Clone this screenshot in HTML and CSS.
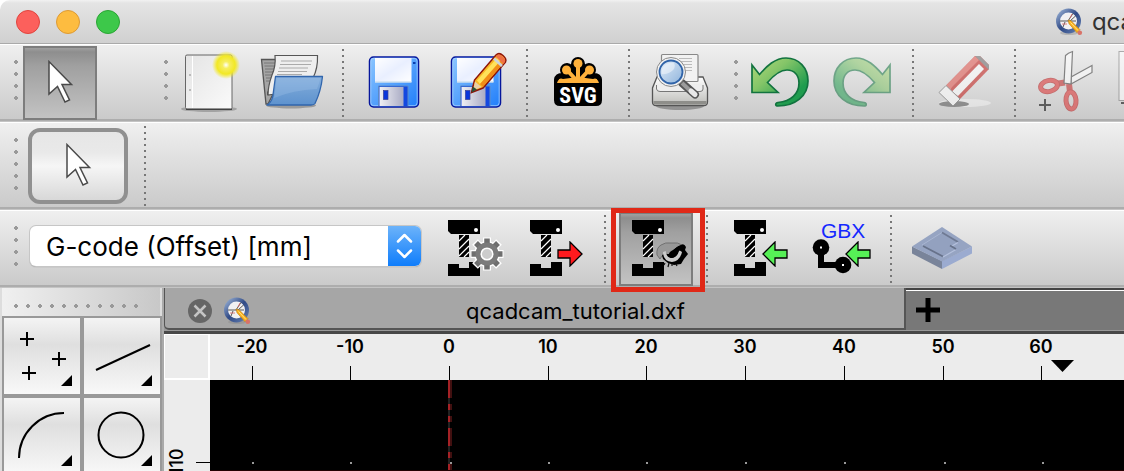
FILE: index.html
```html
<!DOCTYPE html>
<html lang="en">
<head>
    <meta charset="UTF-8">
    <meta name="viewport" content="width=device-width, initial-scale=1.0">
    <title>qcadcam_tutorial.dxf</title>
    <link rel="stylesheet" href="styles.css">
</head>
<body>
    <!-- shared shapes and gradients -->
    <svg class="defs" width="0" height="0" aria-hidden="true">
        <defs>
            <linearGradient id="gPage" x1="0" y1="0" x2="1" y2="1"><stop offset="0" stop-color="#e4e4e4"/><stop offset="1" stop-color="#fafafa"/></linearGradient>
            <radialGradient id="gGlow"><stop offset="0" stop-color="#fff"/><stop offset=".25" stop-color="#f6ee60"/><stop offset=".65" stop-color="#f2e824"/><stop offset="1" stop-color="#f2e824" stop-opacity="0"/></radialGradient>
            <linearGradient id="gFolder" x1="0" y1="0" x2="0" y2="1"><stop offset="0" stop-color="#85aedb"/><stop offset="1" stop-color="#5d92ce"/></linearGradient>
            <linearGradient id="gDisk" x1="0" y1="0" x2="1" y2="1"><stop offset="0" stop-color="#8cc6ff"/><stop offset="1" stop-color="#1f7dfa"/></linearGradient>
            <linearGradient id="gLabel" x1="0" y1="0" x2="1" y2="1"><stop offset="0" stop-color="#fff"/><stop offset=".5" stop-color="#e9efff"/><stop offset="1" stop-color="#fff"/></linearGradient>
            <linearGradient id="gShutter" x1="0" y1="0" x2="1" y2="0"><stop offset="0" stop-color="#f0f0f4"/><stop offset="1" stop-color="#a9abc4"/></linearGradient>
            <linearGradient id="gUndo" x1="0" y1="0" x2="1" y2="1"><stop offset="0" stop-color="#b4da7c"/><stop offset=".35" stop-color="#84c568"/><stop offset=".75" stop-color="#1f9c4e"/></linearGradient>
            <linearGradient id="gPrinter" x1="0" y1="0" x2="0" y2="1"><stop offset="0" stop-color="#fff"/><stop offset="1" stop-color="#bcbcb8"/></linearGradient>
            <linearGradient id="gLens" x1="0" y1="0" x2="1" y2="1"><stop offset="0" stop-color="#e2edf8"/><stop offset="1" stop-color="#8fb4dc"/></linearGradient>
            <linearGradient id="gRing" x1="0" y1="0" x2="1" y2="1"><stop offset="0" stop-color="#a9c0e0"/><stop offset=".5" stop-color="#304a86"/><stop offset="1" stop-color="#6a86b8"/></linearGradient>
        </defs>
        <symbol id="cursor" viewBox="0 0 74 74">
            <path d="M26 15.500V48L34.500 40.500 42 56 46.500 54 39 38.500H48.500Z" fill="#fff" stroke="#4a4a4a" stroke-width="1.500"/>
        </symbol>
        <symbol id="disk" viewBox="0 0 74 74">
            <rect x="12.500" y="11" width="49" height="50" rx="4" fill="url(#gDisk)" stroke="#06169c" stroke-width="1.500"/>
            <rect x="13.800" y="12.300" width="46.400" height="47.400" rx="3" fill="none" stroke="#a8d2ff" stroke-width=".8"/>
            <rect x="18" y="12" width="36.500" height="24" fill="url(#gLabel)"/>
            <path d="M18 36h36.500" stroke="#cfe0ee" stroke-width="1.500"/>
            <rect x="56" y="16" width="2.500" height="2" fill="#0a3fae"/>
            <path d="M21.500 60V40H51V60" fill="#1348e0" stroke="#5c8ac6" stroke-width="1"/>
            <rect x="22.500" y="41" width="24" height="19" fill="url(#gShutter)"/>
            <rect x="26.500" y="44.500" width="4.500" height="9" fill="#0a36dc" stroke="#3b3f92" stroke-width=".7"/>
        </symbol>
        <symbol id="undo" viewBox="0 0 74 74">
            <path d="M9 19 16.500 28.500C24 20 32 12 43 12 56 12 65 22 65 35 65 50 52 60 35 60 32 60 32 57 35 56.500 48 55 56 48 56 37 56 29 51 24 44 24 36 24 30 30 24.500 36.500L35 46.500H9Z" fill="url(#gUndo)" stroke="#12733f" stroke-width="1.700"/>
        </symbol>
        <symbol id="mill" viewBox="0 0 74 74">
            <path d="M13 8h32v14h-29l-3-3z"/>
            <circle cx="41" cy="18" r="2" fill="#fff"/>
            <path d="M24 23h10v22H24zM13 52h11v4h10v-6h11v14H13z"/>
            <path d="M24 29l6-6M24 37L34 27M24 44L34 34M29 45l5-5" stroke="#fff" stroke-width="1.200"/>
        </symbol>
        <symbol id="arrow" viewBox="0 0 26 26">
            <path d="M25 13 13 1V9H1V17H13V25Z" stroke="#000" stroke-width="1.300"/>
        </symbol>
        <symbol id="app" viewBox="0 0 28 28">
            <ellipse cx="14" cy="25" rx="9" ry="2" fill="#888" opacity=".4"/>
            <circle cx="13.500" cy="13" r="12.500" fill="url(#gRing)"/>
            <circle cx="13.500" cy="13" r="8.500" fill="#f1f1f3"/>
            <path d="M5 13H21M13 13 18 5.500M14.500 13.500 20.500 8M10 14 8 19" stroke="#444" stroke-width=".9" fill="none"/>
            <path d="M7 16h5M15 10l2-4" stroke="#d66" stroke-width=".8"/>
            <path d="M13 12l3 .7 9 9-3 3-8-9z" fill="#f9b01c" stroke="#b97b16" stroke-width=".6"/>
            <path d="M15.500 14.500l7.500 8" stroke="#ffe58a" stroke-width="1"/>
            <circle cx="24.800" cy="24.800" r="2.300" fill="#d97268"/>
        </symbol>
    </svg>

    <header class="titlebar">
        <button class="light light-close" aria-label="Close"></button>
        <button class="light light-min" aria-label="Minimize"></button>
        <button class="light light-zoom" aria-label="Zoom"></button>
        <div class="window-title">
            <svg width="28" height="28"><use href="#app"/></svg>
            <span>qca</span>
        </div>
    </header>

    <div class="toolbar">
        <div class="group group-select">
            <span class="handle"></span>
            <button class="tool active" aria-label="Select"><svg><use href="#cursor"/></svg></button>
        </div>
        <div class="group group-file">
            <span class="handle"></span>
            <button class="tool" aria-label="New">
                <svg viewBox="0 0 74 74">
                    <ellipse cx="36" cy="63" rx="28" ry="3" fill="#777" opacity=".5"/>
                    <rect x="12.500" y="9" width="46.500" height="54" rx="1.500" fill="url(#gPage)" stroke="#666" stroke-width="1"/>
                    <path d="M13 63.300H59" stroke="#333"/>
                    <path d="M19.500 10V62" stroke="#fff"/>
                    <circle cx="17" cy="29" r="1" fill="#aaa"/><circle cx="17" cy="44" r="1" fill="#aaa"/>
                    <circle cx="53" cy="19" r="14" fill="url(#gGlow)"/>
                </svg>
            </button>
            <button class="tool" aria-label="Open">
                <svg viewBox="0 0 74 74">
                    <ellipse cx="36" cy="59.500" rx="25" ry="3" fill="#666" opacity=".5"/>
                    <path d="M6.500 13.500H22V40L13 58H11Z" fill="#a5a5a5" stroke="#555" stroke-width="1.300"/>
                    <path d="M9 17h11M9.500 20h10M10 23h9M10 26h8M10 29h7M11 32h6M11 35h6" stroke="#777"/>
                    <path d="M12 46q2-3 2 0v3h-2z" fill="#555"/>
                    <path d="M20 9.500H62.500Q63 22 58 32L20 48 13 49Q13 40 17 29 21 20 20 9.500Z" fill="#eee" stroke="#555" stroke-width="1.200"/>
                    <path d="M26 15H57M25 18.500H56M24 22H53M23 25.500H52M22 28.500H47" stroke="#aaa" stroke-width="1"/>
                    <path d="M20.500 30.500H67.500Q66 45 60 57.500Q59 59 56 59H12Q18 56 18.500 45Z" fill="url(#gFolder)" stroke="#3166ad" stroke-width="1.300" stroke-linejoin="round"/>
                    <path d="M21.500 32H65.500Q64 38 62 43 38 44 19 52 21 42 21.500 32Z" fill="#a7c8ec" opacity=".3"/>
                </svg>
            </button>
            <span class="sep"></span>
            <button class="tool" aria-label="Save"><svg><use href="#disk"/></svg></button>
            <button class="tool" aria-label="Save As">
                <svg viewBox="0 0 74 74">
                    <use href="#disk"/>
                    <path d="M32.500 46.500 35.500 34 57 9Q60 6 64 9.500 68 13 66.500 16L44 42Z" fill="#f9b826" stroke="#8e1409" stroke-width="1.500"/>
                    <path d="M38 34.500 58 12 61 15 41 38Z" fill="#ffe25a"/>
                    <path d="M41 38 61.500 15 64 17.500 44 41Z" fill="#f18d18"/>
                    <path d="M57 11 64.500 18 66 16Q67 13 63 10 60 7.500 57.500 9.500Z" fill="#ef7044"/>
                    <path d="M55 12.500 63 20" stroke="#ccd3dc" stroke-width="2.500"/>
                    <path d="M36 35.500 34 44.500 42.500 41Z" fill="#e8cfa7"/>
                    <path d="M32.500 46.500 33.800 40.500 38 43.500Z" fill="#28523a"/>
                </svg>
            </button>
            <span class="sep"></span>
            <button class="tool" aria-label="Export SVG">
                <svg viewBox="0 0 74 74">
                    <path d="M13 35Q13 32 16 32H58Q61 32 61 35V54Q61 60 55 60H19Q13 60 13 54Z"/>
                    <path d="M37 36V18M37 36 26 24M37 36 48 24M37 36 20 34M37 36 54 34" stroke="#000" stroke-width="14" stroke-linecap="round"/>
                    <path d="M37 36V18M37 36 26 24M37 36 48 24M37 35 18 35M37 35 56 35" stroke="#ffb13b" stroke-width="4"/>
                    <g fill="#ffb13b"><circle cx="37" cy="17.500" r="4.500"/><circle cx="25.500" cy="24" r="4.500"/><circle cx="48.500" cy="24" r="4.500"/><path d="M16 37Q18 31 22 33L37 31 52 33Q56 31 58 37Z"/></g>
                    <rect x="14" y="37" width="46" height="22" rx="4"/>
                    <text x="37" y="57" text-anchor="middle" class="svg-word">SVG</text>
                </svg>
            </button>
            <span class="sep"></span>
            <button class="tool" aria-label="Print Preview">
                <svg viewBox="0 0 74 74">
                    <ellipse cx="37" cy="60" rx="24" ry="4" fill="#555" opacity=".5"/>
                    <path d="M14 31H60L64.500 42V56Q64.500 59.500 61 59.500H13Q9.500 59.500 9.500 56V42Z" fill="url(#gPrinter)" stroke="#555" stroke-width="1.300"/>
                    <rect x="18.500" y="8.500" width="36.500" height="27" rx="1" fill="#f2f2f2" stroke="#888" stroke-width="1.200"/>
                    <path d="M36 12.500H49M38 15.500H49M40 18.500H49M41 21.500H49M41 24.500H49" stroke="#bbb" stroke-width="1.200"/>
                    <path d="M13.500 39V43Q14 45.500 17 45.500H57Q60 45.500 60 43V39" fill="#eee" stroke="#777"/>
                    <path d="M10.500 56.500H63.500" stroke="#8e8e8a" stroke-width="3"/>
                    <path d="M39 37 52 48.500" stroke="#555" stroke-width="8" stroke-linecap="round"/>
                    <path d="M39 37 47 44.500" stroke="#9b9b9b" stroke-width="4"/>
                    <path d="M48 45 52 48.500" stroke="#e8e8e8" stroke-width="5" stroke-linecap="round"/>
                    <circle cx="28" cy="26" r="14.500" fill="#f1f1f1" stroke="#8a8a8a"/>
                    <circle cx="28" cy="26" r="11.500" fill="url(#gLens)" stroke="#2f63a8" stroke-width="1.800"/>
                    <path d="M18.500 28Q18 17 30 16.500 33 18 31 23 26 29 18.500 28Z" fill="#fff" opacity=".45"/>
                </svg>
            </button>
        </div>
        <div class="group group-edit">
            <span class="handle"></span>
            <button class="tool" aria-label="Undo"><svg><use href="#undo"/></svg></button>
            <button class="tool" aria-label="Redo" disabled><svg viewBox="0 0 74 74"><use href="#undo" transform="translate(74) scale(-1 1)"/></svg></button>
            <span class="sep"></span>
            <button class="tool" aria-label="Delete" disabled>
                <svg viewBox="0 0 74 74">
                    <ellipse cx="38" cy="57" rx="26" ry="4" fill="#fff" opacity=".7"/>
                    <ellipse cx="27" cy="58" rx="15" ry="3" fill="#555"/>
                    <path d="M19 39.500 48 10H53L62 19V23L33 53Z" fill="#c01814"/>
                    <path d="M19 39.500 48 10 52 14 26 40Q23 43 24 44Z" fill="#e0524a"/>
                    <path d="M25 45.500 52 18 57 23 31 50Z" fill="#fff"/>
                    <path d="M48 10H53L62 19V24Z" fill="#666"/>
                    <path d="M12 46.500 19 39.500 33 53 26 60Z" fill="#fff" stroke="#666" stroke-width="1"/>
                </svg>
            </button>
            <span class="sep"></span>
            <button class="tool" aria-label="Cut with Reference" disabled>
                <svg viewBox="0 0 74 74">
                    <path d="M42 31 63 19.500V26.500L42 38Z" fill="#fff" stroke="#333" stroke-width="1.200"/>
                    <path d="M26 38 36 36.500M40 38 41 46" stroke="#c02020" stroke-width="6"/>
                    <g fill="none" stroke="#b01414" stroke-width="5"><ellipse cx="20" cy="40" rx="8.500" ry="5.500" transform="rotate(-12 20 40)"/><ellipse cx="42" cy="54.500" rx="5" ry="8.500" transform="rotate(-4 42 54.500)"/></g>
                    <g fill="none" stroke="#dc2c2c" stroke-width="3.500"><ellipse cx="20" cy="40" rx="8.500" ry="5.500" transform="rotate(-12 20 40)"/><ellipse cx="42" cy="54.500" rx="5" ry="8.500" transform="rotate(-4 42 54.500)"/></g>
                    <path d="M35 37 36.500 9.500Q39 7 43.500 5.500L42 38Z" fill="#fff" stroke="#333" stroke-width="1.200"/>
                    <path d="M10 59H22M16 53V65" stroke="#000" stroke-width="2"/>
                </svg>
            </button>
            <button class="tool" aria-label="Copy" disabled>
                <svg viewBox="0 0 74 74">
                    <rect x="8" y="5.500" width="46" height="49" fill="#fff" stroke="#777"/>
                    <path d="M10 57H22" stroke="#000" stroke-width="2"/>
                </svg>
            </button>
        </div>
    </div>

    <div class="toolbar toolbar-options">
        <span class="handle handle-tall"></span>
        <button class="option" aria-label="Selection tool"><svg><use href="#cursor"/></svg></button>
        <span class="sep"></span>
    </div>

    <div class="toolbar toolbar-cam">
        <span class="handle"></span>
        <div class="combo">
            <select aria-label="Configuration">
                <option>G-code (Offset) [mm]</option>
            </select>
            <svg class="combo-arrows" viewBox="0 0 33 40">
                <path d="M10 15.500 16.500 9 23 15.500M10 24.500 16.500 31 23 24.500" fill="none" stroke="#fff" stroke-width="2.500" stroke-linecap="round" stroke-linejoin="round"/>
            </svg>
        </div>
        <button class="tool" aria-label="CAM Configuration">
            <svg viewBox="0 0 74 74">
                <use href="#mill"/>
                <g transform="translate(52 42)">
                    <g stroke="#fff" stroke-width="8"><path d="M0-16.500V16.500M-16.500 0H16.500M-12-12 12 12M-12 12 12-12"/></g>
                    <circle r="13" fill="#fff"/>
                    <g stroke="#6f6f6f" stroke-width="5.500"><path d="M0-15.500V15.500M-15.500 0H15.500M-11-11 11 11M-11 11 11-11"/></g>
                    <circle r="11.500" fill="#7b7b7b"/>
                    <circle r="5.800" fill="#ccc" stroke="#fff" stroke-width="1.500"/>
                </g>
            </svg>
        </button>
        <button class="tool" aria-label="CAM Export">
            <svg viewBox="0 0 74 74"><use href="#mill"/><use href="#arrow" x="40" y="29" width="26" height="26" fill="#ff1a1e"/></svg>
        </button>
        <span class="sep"></span>
        <div class="highlight">
            <button class="tool active" aria-label="CAM Preview">
                <svg viewBox="0 0 74 74">
                    <use href="#mill"/>
                    <path d="M38 43Q37 36 42 33 46 30 53 31 59 30 63 33L60 46 52 51Q46 49 43 44L41 47Z" fill="#989898" stroke="#666" stroke-width=".8"/>
                    <path d="M62 33Q65 31 67 35L66 38 69 42 65 47 62 52 55 53 49 51 44 47 43 43Z"/>
                    <path d="M44 40Q44 49 53 50 61 49 63 40L60 38Q57 46 52 46 47 45 47 39Z" fill="#cbcbcb"/>
                    <path d="M49 44Q54 43 55 38 57 34 63 33 64 37 60 39 58 46 52 46Z"/>
                    <path d="M50 34Q56 34 60 33L54 38Q50 40 50 42L47 42Q46 36 50 34Z" fill="#989898"/>
                    <path d="M46 51l-1 2M50 51l-1 4M53 52v2M57 52l1 2" stroke="#111" stroke-width="1.200"/>
                </svg>
            </button>
        </div>
        <span class="sep"></span>
        <button class="tool" aria-label="CAM Import">
            <svg viewBox="0 0 74 74"><use href="#mill"/><g transform="translate(67) scale(-1 1)"><use href="#arrow" x="0" y="29" width="26" height="26" fill="#56f056"/></g></svg>
        </button>
        <button class="tool" aria-label="Gerber Import">
            <svg viewBox="0 0 74 74">
                <text x="18" y="26" class="gbx-word">GBX</text>
                <path d="M18 35V53H40" fill="none" stroke="#000" stroke-width="6"/>
                <circle cx="18" cy="35.500" r="8.300"/><circle cx="40" cy="53" r="8.300"/>
                <path d="M17 34.500h2v2h-2zM39 52h2v2h-2z" fill="#fff"/>
                <g transform="translate(68) scale(-1 1)"><use href="#arrow" x="0" y="29" width="26" height="26" fill="#56f056"/></g>
            </svg>
        </button>
        <span class="sep"></span>
        <button class="tool" aria-label="Simulation">
            <svg viewBox="0 0 74 74">
                <path d="M7 34.500V41.500L37 57V49Z" fill="#79849a"/>
                <path d="M67 34.500V41.500L37 57V49Z" fill="#9babd0"/>
                <path d="M37 15 67 34.500 37 49.500 7 34.500Z" fill="#96a4c2"/>
                <path d="M17 33 37 20.500 53 30 46 34 51 37 38 44.500Z" fill="#93a1bf"/>
                <path d="M17 33 37 20.500" stroke="#a9b6d2"/>
                <path d="M18 34 38 44.500" stroke="#67728a" stroke-width="1.800"/>
                <path d="M37 20.500 53 30" stroke="#6f7a93" stroke-width="1.800"/>
                <path d="M53 30.500 46 34.500M51 37.500 38 45" stroke="#b4c0dc" stroke-width="1.200"/>
                <path d="M45 33.500 51 37" stroke="#67728a" stroke-width="1.800"/>
            </svg>
        </button>
    </div>

    <main class="workspace">
        <aside class="palette">
            <div class="palette-handle"><span></span></div>
            <div class="palette-grid">
                <button aria-label="Point tools"><svg viewBox="0 0 76 76"><path d="M16 21H30M23 14V28M48 41H62M55 34V48M18 55H32M25 48V62" stroke="#000" stroke-width="2"/><path d="M57 68 68 57V68Z"/></svg></button>
                <button aria-label="Line tools"><svg viewBox="0 0 76 76"><path d="M12 52 66 27" stroke="#000" stroke-width="2"/><path d="M57 68 68 57V68Z"/></svg></button>
                <button aria-label="Arc tools"><svg viewBox="0 0 76 76"><path d="M15 60A45 45 0 0 1 60 15" fill="none" stroke="#000" stroke-width="2"/><path d="M57 68 68 57V68Z"/></svg></button>
                <button aria-label="Circle tools"><svg viewBox="0 0 76 76"><circle cx="37" cy="37" r="22.500" fill="none" stroke="#000" stroke-width="2"/><path d="M57 68 68 57V68Z"/></svg></button>
            </div>
        </aside>

        <section class="document">
            <div class="tabs">
                <div class="tab">
                    <button class="tab-close" aria-label="Close tab">
                        <svg viewBox="0 0 24 24"><circle cx="12" cy="12" r="12" fill="#666"/><path d="M6.500 6.500 17.500 17.500M17.500 6.500 6.500 17.500" stroke="#c4c4c4" stroke-width="2.500"/></svg>
                    </button>
                    <svg class="tab-icon" width="28" height="28"><use href="#app"/></svg>
                    <span class="tab-name">qcadcam_tutorial.dxf</span>
                </div>
                <button class="tab-new" aria-label="New tab">
                    <svg viewBox="0 0 24 24"><path d="M0 12H24M12 0V24" stroke="#000" stroke-width="5"/></svg>
                </button>
            </div>
            <div class="sheet">
                <div class="corner"></div>
                <svg class="ruler-top">
                    <g class="labels">
                        <text x="42" y="19">-20</text>
                        <text x="140" y="19">-10</text>
                        <text x="239" y="19">0</text>
                        <text x="338" y="19">10</text>
                        <text x="436" y="19">20</text>
                        <text x="535" y="19">30</text>
                        <text x="634" y="19">40</text>
                        <text x="733" y="19">50</text>
                        <text x="831" y="19">60</text>
                    </g>
                    <path d="M42 32h1v14h-1zM140 32h1v14h-1zM239 32h1v14h-1zM338 32h1v14h-1zM436 32h1v14h-1zM535 32h1v14h-1zM634 32h1v14h-1zM733 32h1v14h-1zM831 32h1v14h-1z"/>
                    <path d="M841 26H864L852.500 38Z"/>
                </svg>
                <svg class="ruler-left">
                    <text class="ruler-text" transform="translate(19 95) rotate(-90)" x="0" y="0">110</text>
                    <path d="M32 82h14v1h-14z"/>
                </svg>
                <svg class="canvas">
                    <path d="M241 0V91" stroke="#411010" stroke-width="2" stroke-dasharray="18 6 6 6 6 6"/>
                    <path d="M239 0V91" stroke="#222" stroke-width="2"/>
                    <path d="M239 0V91" stroke="#a52226" stroke-width="2" stroke-dasharray="18 6 6 6 6 6"/>
                    <path d="M0 90.500H2000" stroke="#200"/>
                    <path d="M42 82h2v2h-2zM140 82h2v2h-2zM240 82h2v2h-2zM338 82h2v2h-2zM436 82h2v2h-2zM535 82h2v2h-2zM634 82h2v2h-2zM734 82h2v2h-2zM832 82h2v2h-2z" fill="#999"/>
                </svg>
            </div>
        </section>
    </main>
</body>
</html>
```
FILE: styles.css
```css
* {
    box-sizing: border-box;
}
body {
    margin: 0;
    height: 100vh;
    display: flex;
    flex-direction: column;
    overflow: hidden;
    background: #fff;
    font-family: Inter, "Liberation Sans", sans-serif;
    color: #000;
}
svg {
    display: block;
    flex-shrink: 0;
}
button {
    padding: 0;
    border: none;
    background: none;
    flex-shrink: 0;
}
.defs {
    position: absolute;
}

/* title bar */
.titlebar {
    display: flex;
    align-items: center;
    gap: 16px;
    height: 44px;
    flex-shrink: 0;
    padding-left: 16px;
    overflow: hidden;
    border-top-left-radius: 10px;
    border-bottom: 1px solid #aaa;
    background: linear-gradient(#f2f2f2, #e4e4e4 3px, #d0d0d0);
}
.light {
    width: 24px;
    height: 24px;
    border-radius: 50%;
    border: 1px solid;
}
.light-close {
    background: #fc605c;
    border-color: #e0443e;
}
.light-min {
    background: #fdbc40;
    border-color: #dd9a34;
}
.light-zoom {
    background: #3dc84a;
    border-color: #2aa534;
}
.window-title {
    display: flex;
    align-items: center;
    gap: 9px;
    margin-left: auto;
    margin-right: -10px;
    font-size: 24px;
    color: #333;
}

/* toolbars */
.toolbar {
    display: flex;
    align-items: center;
    height: 78px;
    flex-shrink: 0;
    overflow: hidden;
    background: linear-gradient(#f0f0f0, #c9c9c9);
    box-shadow: inset 0 1px #fff, inset 0 -1px #c4c4c4, inset 0 -3px #adadad;
}
.toolbar-options {
    height: 88px;
    padding-left: 9px;
}
.toolbar-cam {
    padding-left: 9px;
    overflow: visible;
}
.group {
    display: flex;
    align-items: center;
    flex-shrink: 0;
    padding-left: 9px;
}
.group-select {
    width: 150px;
}
.group-file {
    padding-right: 3px;
}
.group-edit {
    flex: 1;
    min-width: 0;
    overflow: hidden;
}
.handle {
    width: 14px;
    height: 48px;
    margin-bottom: 6px;
    flex-shrink: 0;
    background: radial-gradient(circle, #999 2px, transparent 2px) 0 0 / 14px 12px;
}
.handle-tall {
    height: 60px;
    margin-bottom: 4px;
}
.sep {
    width: 28px;
    height: 68px;
    flex-shrink: 0;
    background: repeating-linear-gradient(#777 0 2px, transparent 2px 6px) center / 2px 100% no-repeat;
}
.tool, .tool svg {
    width: 74px;
    height: 74px;
}
.tool + .tool {
    margin-left: 8px;
}
.tool.active {
    background: linear-gradient(#a8a8a8, #8e8e8e 6px, #a0a0a0 20px, #c4c4c4);
    box-shadow: inset 0 0 0 2px #7d7d7d;
}
.tool:disabled svg {
    opacity: 0.55;
}
.option {
    width: 100px;
    height: 76px;
    margin-left: 5px;
    border: 4px solid #909090;
    border-radius: 12px;
    background: linear-gradient(#e6e6e6, #e9e9e9 30%, #f6f6f6 50%, #d8d8d8);
    display: flex;
    align-items: center;
    justify-content: center;
}
.option svg {
    width: 74px;
    height: 74px;
}
.toolbar-options .sep {
    height: 80px;
    margin-left: 3px;
}
.combo {
    position: relative;
    width: 391px;
    margin: 0 14px 6px 7px;
}
.combo select {
    appearance: none;
    display: block;
    width: 100%;
    height: 40px;
    padding: 0 40px 0 16px;
    border: none;
    border-radius: 6px;
    background: #fff;
    box-shadow: 0 0 0 1px #c6c6c6, 0 1px 1px #777;
    font: 26px Inter, "Liberation Sans", sans-serif;
    color: #000;
}
.combo-arrows {
    position: absolute;
    top: 0;
    right: 0;
    width: 33px;
    height: 40px;
    border-radius: 0 6px 6px 0;
    background: linear-gradient(#6cb3fa, #0f7dfb);
    pointer-events: none;
}
.highlight {
    position: relative;
    display: flex;
    flex-shrink: 0;
}
.highlight::after {
    content: "";
    position: absolute;
    inset: -4px -12px -6px -8px;
    border: 5px solid #e02817;
    z-index: 1;
    pointer-events: none;
}
.svg-word {
    font: bold 22px "Liberation Sans Narrow", "Roboto Condensed", Roboto, sans-serif;
    fill: #fff;
}
.gbx-word {
    font: 21px "Liberation Sans", sans-serif;
    fill: #1428ff;
}

/* tool palette */
.workspace {
    display: flex;
    flex: 1;
    min-height: 0;
}
.palette {
    width: 164px;
    flex-shrink: 0;
    padding: 0 2px;
    background: #ddd;
    border-right: 2px solid #aaa;
    overflow: hidden;
}
.palette-handle {
    height: 28px;
    padding: 12px 8px;
    background: linear-gradient(to right, #f0f0f0, #c8c8c8);
}
.palette-handle span {
    display: block;
    width: 132px;
    height: 12px;
    background: radial-gradient(circle, #999 2px, transparent 2px) 0 0 / 12px 12px;
}
.palette-grid {
    display: grid;
    grid-template-columns: 80px 80px;
}
.palette-grid button {
    height: 80px;
    border: 2px solid #999;
    background: linear-gradient(#f4f4f4, #dfdfdf 35%, #f8f8f8);
}

/* document area */
.document {
    flex: 1;
    min-width: 0;
    display: flex;
    flex-direction: column;
}
.tabs {
    display: flex;
    height: 46px;
    flex-shrink: 0;
    border-bottom: 3px solid #484848;
    background: #999;
}
.tab {
    display: flex;
    align-items: center;
    width: 742px;
    height: 42px;
    padding-left: 23px;
    padding-top: 5px;
    border: solid #555;
    border-width: 0 2px 2px 1px;
    border-bottom-left-radius: 5px;
    background: #a6a6a6;
}
.tab-close, .tab-close svg {
    width: 24px;
    height: 24px;
}
.tab-icon {
    margin-left: 11px;
}
.tab-name {
    flex: 1;
    padding-right: 4px;
    text-align: center;
    font-size: 22px;
}
.tab-new {
    display: flex;
    flex: 1;
    align-items: center;
    height: 42px;
    padding-left: 10px;
    border-top: 2px solid #444;
    background: #787878;
    box-shadow: inset 0 1px #fff;
}
.tab-new svg {
    width: 24px;
    height: 24px;
}
.sheet {
    display: grid;
    grid-template-columns: 46px 1fr;
    grid-template-rows: 46px 1fr;
    flex: 1;
    min-height: 0;
    background: #ececec;
}
.corner {
    border: solid #fff;
    border-width: 1px 2px 2px 1px;
}
.ruler-top, .ruler-left, .canvas {
    width: 100%;
    height: 100%;
    overflow: hidden;
}
.labels {
    text-anchor: middle;
    font-size: 18px;
    font-weight: 600;
}
.ruler-text {
    font-size: 18px;
    font-weight: 500;
}
.canvas {
    background: #000;
}
```
